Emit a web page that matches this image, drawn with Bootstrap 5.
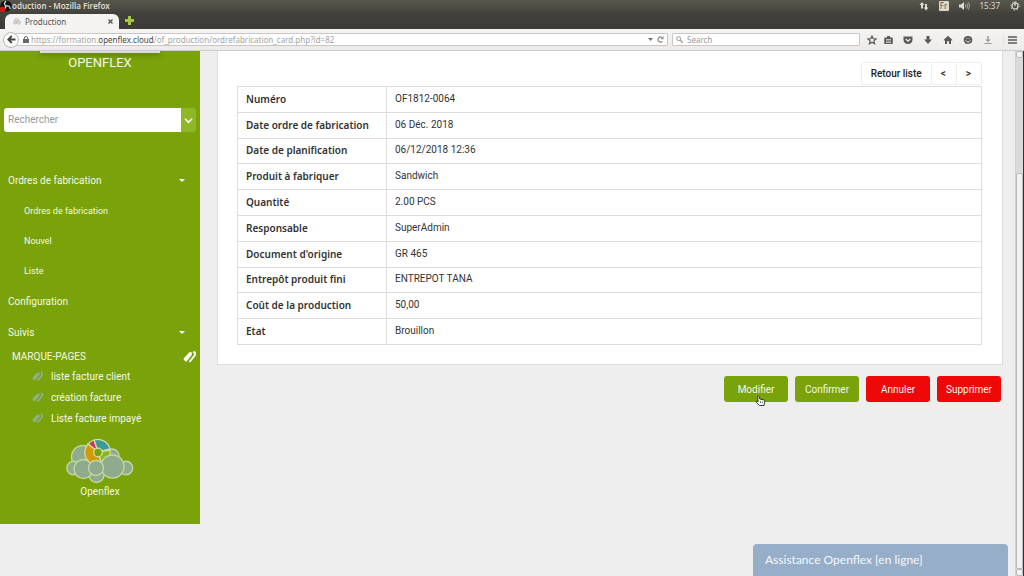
<!DOCTYPE html>
<html lang="fr">
<head>
<meta charset="utf-8">
<meta name="viewport" content="width=device-width, initial-scale=1">
<title>Production</title>
<link href="https://cdn.jsdelivr.net/npm/bootstrap@5.3.0/dist/css/bootstrap.min.css" rel="stylesheet">
<style>
:root{--green:#7aa20a;--lime:#8fb826;--ink:#333}
body{font-family:Roboto,"Liberation Sans",sans-serif;font-size:10px;line-height:14px;background:#eee;color:var(--ink)}
svg{display:block;flex:none}
a{text-decoration:none;color:inherit}
/* window chrome */
.chrome{font-family:"Noto Sans",sans-serif;font-size:8px;line-height:12px}
.titlebar{height:12px;background:linear-gradient(#59584e,#45443e);color:#dedbd2}
.titlebar .wtitle{font-weight:600}
.tray{gap:10px}
.kbd-box{background:#dcd9d0;color:#55534c;border-radius:1px;line-height:10px;width:10px;text-align:center}
.tabstrip{height:17px;background:linear-gradient(#43423c,#3b3a35);padding-left:5px}
.page-tab{height:15px;width:114px;padding:0 6px 0 8px;background:#f4f3f1;color:#55534f;border-radius:6px 6px 0 0;border:0}
.page-tab .label-text{padding-left:4px}
.new-tab{border:0;background:none;padding:0 0 0 6px}
.toolbar{height:22px;background:linear-gradient(#f5f4f2,#edebe9);border-bottom:1px solid #cfcccb;padding:0 7px 0 3px;color:#5a5a58}
.back{width:16px;height:16px;border:1px solid #bbb8b4;border-radius:50%;background:#fbfbfb;padding:0;z-index:1}
.urlbox,.searchbox{height:13px;background:#fff;border:1px solid #c9c6c3;border-radius:1px}
.urlbox{margin-left:-4px;padding:0 3px 0 7px}
.searchbox{width:188px;margin-left:4px;padding-left:3px}
.chrome input{border:0;background:none;outline:0;padding:0;min-width:0;color:#888}
.chrome input::placeholder{color:#999}
.url-text{color:#a3a3a3;padding-left:2px}
.url-text b{font-weight:normal;color:#444}
.tools{gap:10px;padding-left:7px}
.tools .near{margin-left:-3px}
.tools button,.urlbox button{border:0;background:none;padding:0;color:inherit}
/* sidebar */
.sidebar{width:200px;background:var(--green);color:#f4f8e4;padding-bottom:25px}
.brand-edge{width:120px;height:2px;background:#dcdfd0;box-shadow:0 2px 4px rgba(50,70,0,.6)}
.brand-name{font-size:13px;line-height:20px}
.finder{margin:35px 4px 0;height:24px}
.finder input{font-size:10px;border:0;border-radius:3px 0 0 3px;padding:0 4px;color:#555;background:#fff}
.finder input::placeholder{color:#999}
.finder button{width:15px;background:var(--lime);border:0;border-radius:0 3px 3px 0;padding:0 3px}
.side-menu{margin-top:33px}
.side-menu>a{height:31px;padding:0 15px 0 8px;font-size:10px}
.side-menu>a.sub{height:30px;padding-left:24px;font-size:9px}
.caret{border:3px solid transparent;border-top-color:#fff;border-bottom:0}
.marks-head{padding:0 4px 0 12px;height:18px;font-size:10px}
.marks a{height:21px;padding-left:32px;gap:8px;font-size:10px}
.cloud-link{padding-top:9px}
/* content */
.content{padding:0 12px 0 17px}
.sheet{background:#fff;border:1px solid #ddd;border-top:0;padding:11px 20px 19px 19px}
.pager .btn{font-size:10px;font-weight:500;line-height:15px;padding:3px 9px;border:1px solid #eee;border-radius:2px;color:#222;background:#fff}
.pager .btn+.btn{border-left:0;padding:3px 10px 3px 9px}
.fiche{font-family:"Noto Sans",sans-serif;font-size:10px;line-height:14px;height:259px;margin:1px 0 0;border-color:#ddd;color:var(--ink)}
.fiche th,.fiche td{padding:0 8px 1px;vertical-align:middle;color:var(--ink);border:1px solid #ddd}
.fiche td{font-family:Roboto,sans-serif}
.fiche th{width:149px;font-weight:600}
.actions{gap:7px;padding:11px 2px 0 0}
.actions .btn{width:64px;height:26px;padding:0;font-size:10px;border:0;border-radius:3px;color:#f6f6ec}
.btn-go{background:var(--green)!important}
.btn-stop{background:#ee0808!important}
.hand{left:31px;top:19px}
.assist{right:16px;width:255px;height:32px;background:#96aec8;border:0;border-radius:4px 4px 0 0;color:#f5f8fc;font-family:Lato,sans-serif;font-size:12px;text-align:left;padding:0 12px}
.scroll{width:9px;background:#dcdad9;border-left:1px solid #d2d1cf;border-right:1px solid #333}
.scroll i{display:block;height:7px;background:#f4f4f4;border:1px solid #bbb;border-radius:2px}
.scroll .thumb{margin-top:115px;background:#f3f2f1}
</style>
</head>
<body class="vh-100 d-flex flex-column overflow-hidden">
<svg class="d-none">
  <symbol id="tags" viewBox="0 0 13 12"><path d="M1 7 6 1.500 8.500 1 9 3.500 4 10Q3 11 2 10L.8 8.700Q.3 8 1 7Z" fill="currentColor"/><path d="M10.200 1 11.800 1.500 12 4 6.500 11" fill="none" stroke="currentColor" stroke-width="1.900"/></symbol>
</svg>

<header class="chrome">
  <div class="titlebar d-flex align-items-center justify-content-between pe-1">
    <div class="d-flex align-items-center">
      <svg width="12" height="12" viewBox="0 0 12 12"><circle cx="6" cy="6" r="5.600" fill="#111"/><path d="M6 6Q3 4 6 1M6 6Q10 5 10 9M6 6Q5 10 2 9" stroke="#ddd" stroke-width="1.300" fill="none"/><circle cx="2.600" cy="9.400" r="2.600" fill="#e01010"/></svg>
      <span class="wtitle">oduction - Mozilla Firefox</span>
    </div>
    <div class="tray d-flex align-items-center">
      <svg width="10" height="10" viewBox="0 0 10 10" fill="#dedbd2"><path d="M3 1 5.500 4H4v3.500H2V4H.5ZM7 9.500 4.700 6.500H6V3h2v3.500h1.500Z"/></svg>
      <span class="kbd-box">Fr</span>
      <svg width="11" height="10" viewBox="0 0 11 10"><path d="M0 3.500h2L5 1v8L2 6.500H0Z" fill="#dedbd2"/><path d="M6.300 3.500q1 1.500 0 3M7.800 2.300q2 2.700 0 5.400M9.300 1.300q2.600 3.700 0 7.400" stroke="#bab7ae" fill="none" stroke-width=".8"/></svg>
      <span>15:37</span>
      <svg width="10" height="10" viewBox="0 0 10 10" fill="none" stroke="#dedbd2"><circle cx="5" cy="5" r="3" stroke-width="1.200"/><circle cx="5" cy="5" r="4.200" stroke-dasharray="1.200 2.100"/><path d="M5 .5v4.500" stroke-width="1.300"/></svg>
    </div>
  </div>
  <div class="tabstrip d-flex align-items-end">
    <button class="page-tab d-flex align-items-center" type="button">
      <svg width="8" height="7" viewBox="0 0 8 7" fill="#ddd" stroke="#aaa" stroke-width=".6"><circle cx="3.500" cy="2.500" r="2"/><circle cx="2" cy="4.500" r="1.600"/><circle cx="5.800" cy="4.500" r="1.800"/></svg>
      <span class="label-text me-auto">Production</span>
      <svg width="5" height="5" viewBox="0 0 5 5"><path d="m.5.500 4 4m0-4-4 4" stroke="#555" stroke-width="1.400"/></svg>
    </button>
    <button class="new-tab align-self-center" type="button" aria-label="Nouvel onglet"><svg width="9" height="9" viewBox="0 0 9 9"><path d="M3 0h3v3h3v3H6v3H3V6H0V3h3Z" fill="#a3c940"/></svg></button>
  </div>
  <div class="toolbar d-flex align-items-center">
    <button class="back d-flex align-items-center justify-content-center position-relative" type="button" aria-label="Retour"><svg width="9" height="9" viewBox="0 0 9 9" fill="none" stroke="#444" stroke-width="1.800"><path d="M8.500 4.500H1.500M4.800 1 1.300 4.500 4.800 8"/></svg></button>
    <div class="urlbox d-flex align-items-center flex-grow-1">
      <svg width="6" height="7" viewBox="0 0 6 7"><path d="M0 3h6v4H0Z" fill="#666"/><path d="M1.300 3V2q0-1.500 1.700-1.500T4.700 2v1" fill="none" stroke="#666"/></svg>
      <span class="url-text me-auto">https://formation.<b>openflex.cloud</b>/of_production/ordrefabrication_card.php?id=82</span>
      <svg class="me-1" width="5" height="3" viewBox="0 0 5 3"><path d="M0 0h5L2.500 3Z" fill="#777"/></svg>
      <button type="button" aria-label="Actualiser"><svg width="7" height="7" viewBox="0 0 7 7"><path d="M5.500 5.300A2.500 2.500 0 1 1 5 1.500" fill="none" stroke="#888" stroke-width="1.200"/><path d="M6.500 0v3.200H3.600Z" fill="#888"/></svg></button>
    </div>
    <div class="searchbox d-flex align-items-center">
      <svg width="7" height="7" viewBox="0 0 7 7" fill="none" stroke="#999"><circle cx="2.700" cy="2.700" r="2"/><path d="M4.300 4.300 6.800 6.800" stroke-width="1.300"/></svg>
      <input class="ps-1 flex-grow-1" type="text" placeholder="Search" aria-label="Search">
    </div>
    <div class="tools d-flex align-items-center">
      <button type="button" aria-label="Favori"><svg width="10" height="10" viewBox="0 0 10 10"><path d="m5 1 1.200 2.700 2.900.3-2.200 1.900.7 2.900L5 7.300 2.400 8.800l.7-2.900L.9 4l2.900-.3Z" fill="none" stroke="currentColor" stroke-width="1.200"/></svg></button>
      <button type="button" class="near" aria-label="Liste des favoris"><svg width="9" height="10" viewBox="0 0 9 10"><path d="M1 2.500h2V1h3v1.500h2q.8 0 .8.800v5q0 .7-.8.700H1q-.8 0-.8-.7v-5Q.2 2.500 1 2.500Z" fill="currentColor"/><path d="M2 4.500h5M2 6h5M2 7.500h5" stroke="#eee" stroke-width=".7"/></svg></button>
      <button type="button" aria-label="Pocket"><svg width="10" height="10" viewBox="0 0 10 10"><path d="M.5 1.500h9V5Q9 9 5 9T.5 5Z" fill="currentColor"/><path d="M2.700 4 5 6.200 7.300 4" fill="none" stroke="#eee" stroke-width="1.200"/></svg></button>
      <button type="button" aria-label="Téléchargements"><svg width="10" height="10" viewBox="0 0 10 10"><path d="M3.500 1h3v3.500H9L5 9 1 4.500h2.500Z" fill="currentColor"/></svg></button>
      <button type="button" aria-label="Accueil"><svg width="10" height="10" viewBox="0 0 10 10"><path d="M5 .8 9.500 5l-.7.800-.8-.7V9H6V6.300H4V9H2V5.100l-.8.700L.5 5Z" fill="currentColor"/></svg></button>
      <button type="button" aria-label="Discussion"><svg width="10" height="10" viewBox="0 0 10 10"><path d="M5 1q4.300 0 4.300 4T5 8.800L2.500 9 2.300 8Q.7 7 .7 5 .7 1 5 1Z" fill="currentColor"/><path d="M2.500 5.300q2.500 3.500 5 0M3.300 3.600h1M5.700 3.600h1" stroke="#eee" fill="none" stroke-width=".9"/></svg></button>
      <button type="button" aria-label="Enregistrer"><svg width="10" height="10" viewBox="0 0 10 10" fill="#999"><path d="M4.300 1h1.400v3.500h2L5 7.300 2.300 4.500h2ZM1.500 8h7v1h-7Z"/></svg></button>
      <button type="button" class="border-start ps-1" aria-label="Menu"><svg width="9" height="10" viewBox="0 0 9 10"><path d="M0 2h9M0 5h9M0 8h9" stroke="currentColor" stroke-width="1.600"/></svg></button>
    </div>
  </div>
</header>

<div class="d-flex flex-grow-1 overflow-hidden">
  <aside class="sidebar flex-shrink-0 align-self-start">
    <div class="brand-edge mx-auto"></div>
    <div class="brand-name text-center">OPENFLEX</div>
    <form class="finder d-flex">
      <input class="flex-grow-1 w-100" type="text" placeholder="Rechercher" aria-label="Rechercher">
      <button type="button" aria-label="Options"><svg width="9" height="9" viewBox="0 0 9 9"><path d="m1 2.800 3.500 3.500L8 2.800" fill="none" stroke="#fff" stroke-width="1.600"/></svg></button>
    </form>
    <nav class="side-menu d-flex flex-column">
      <a href="#" class="d-flex align-items-center justify-content-between">Ordres de fabrication<span class="caret"></span></a>
      <a href="#" class="sub d-flex align-items-center">Ordres de fabrication</a>
      <a href="#" class="sub d-flex align-items-center">Nouvel</a>
      <a href="#" class="sub d-flex align-items-center">Liste</a>
      <a href="#" class="d-flex align-items-center">Configuration</a>
      <a href="#" class="d-flex align-items-center justify-content-between">Suivis<span class="caret"></span></a>
    </nav>
    <div class="marks-head d-flex align-items-center justify-content-between">MARQUE-PAGES<svg width="13" height="12" color="#fff"><use href="#tags"/></svg></div>
    <nav class="marks d-flex flex-column">
      <a href="#" class="d-flex align-items-center"><svg width="11" height="11" color="#8fae90"><use href="#tags"/></svg>liste facture client</a>
      <a href="#" class="d-flex align-items-center"><svg width="11" height="11" color="#8fae90"><use href="#tags"/></svg>création facture</a>
      <a href="#" class="d-flex align-items-center"><svg width="11" height="11" color="#8fae90"><use href="#tags"/></svg>Liste facture impayé</a>
    </nav>
    <a href="#" class="cloud-link d-flex flex-column align-items-center">
      <svg width="68" height="47" viewBox="0 0 68 47">
        <g fill="#8fab8d" stroke="#c3d69c" stroke-width="1.400">
          <circle cx="46" cy="18" r="7"/><circle cx="17" cy="19" r="11.500"/><circle cx="7.500" cy="30" r="6.700"/><circle cx="60" cy="30" r="6.700"/>
          <circle cx="30.500" cy="37" r="7.500"/><circle cx="17.500" cy="31" r="9.500"/>
        </g>
        <g stroke="#cfdfa8" stroke-width="1.300">
          <path d="M32 14 28 2A12.500 12.500 0 0 1 44 11Z" fill="#3c9b98"/>
          <path d="M32 14 22 6A12.500 12.500 0 0 1 28 2Z" fill="#c83b58"/>
          <path d="M32 14 22 6A12.500 12.500 0 0 0 36 26Z" fill="#d09a08"/>
          <path d="M32 14 44 12A12.500 12.500 0 0 1 36 26Z" fill="#88b71a"/>
          <circle cx="32" cy="14.500" r="4.300" fill="#7aa20a"/>
        </g>
        <g fill="#8fab8d" stroke="#c3d69c" stroke-width="1.400"><circle cx="46.500" cy="28.500" r="11.500"/><circle cx="30" cy="30" r="7.500"/></g>
      </svg>
      <span>Openflex</span>
    </a>
  </aside>

  <main class="content flex-grow-1">
    <section class="sheet">
      <div class="pager d-flex justify-content-end">
        <a href="#" class="btn">Retour liste</a><a href="#" class="btn">&lt;</a><a href="#" class="btn">&gt;</a>
      </div>
      <table class="fiche table table-bordered">
        <tbody>
        <tr><th scope="row">Numéro</th><td>OF1812-0064</td></tr>
        <tr><th scope="row">Date ordre de fabrication</th><td>06 Déc. 2018</td></tr>
        <tr><th scope="row">Date de planification</th><td>06/12/2018 12:36</td></tr>
        <tr><th scope="row">Produit à fabriquer</th><td>Sandwich</td></tr>
        <tr><th scope="row">Quantité</th><td>2.00 PCS</td></tr>
        <tr><th scope="row">Responsable</th><td>SuperAdmin</td></tr>
        <tr><th scope="row">Document d'origine</th><td>GR 465</td></tr>
        <tr><th scope="row">Entrepôt produit fini</th><td>ENTREPOT TANA</td></tr>
        <tr><th scope="row">Coût de la production</th><td>50,00</td></tr>
        <tr><th scope="row">Etat</th><td>Brouillon</td></tr>
        </tbody>
      </table>
    </section>
    <div class="actions d-flex justify-content-end">
      <button type="button" class="btn btn-go position-relative">Modifier
        <svg class="hand position-absolute" width="11" height="12" viewBox="0 0 11 12"><path d="M2.500 1.200q1-.8 1.500.3L4.800 4l4 .9q1 .3.900 1.600L9 10.500H4.500L1.200 7.200q-.2-1.200 1-1l1 .5Z" fill="#fff" stroke="#222" stroke-width=".9"/><path d="M5.500 6v2M7.300 6.300v2" stroke="#222" stroke-width=".6"/></svg>
      </button>
      <button type="button" class="btn btn-go">Confirmer</button>
      <button type="button" class="btn btn-stop">Annuler</button>
      <button type="button" class="btn btn-stop">Supprimer</button>
    </div>
  </main>

  <div class="scroll d-flex flex-column flex-shrink-0" aria-hidden="true"><i></i><i class="thumb flex-grow-1"></i><i></i></div>
</div>

<button type="button" class="assist position-fixed bottom-0">Assistance Openflex [en ligne]</button>
<script src="https://cdn.jsdelivr.net/npm/bootstrap@5.3.0/dist/js/bootstrap.bundle.min.js"></script>
</body>
</html>
